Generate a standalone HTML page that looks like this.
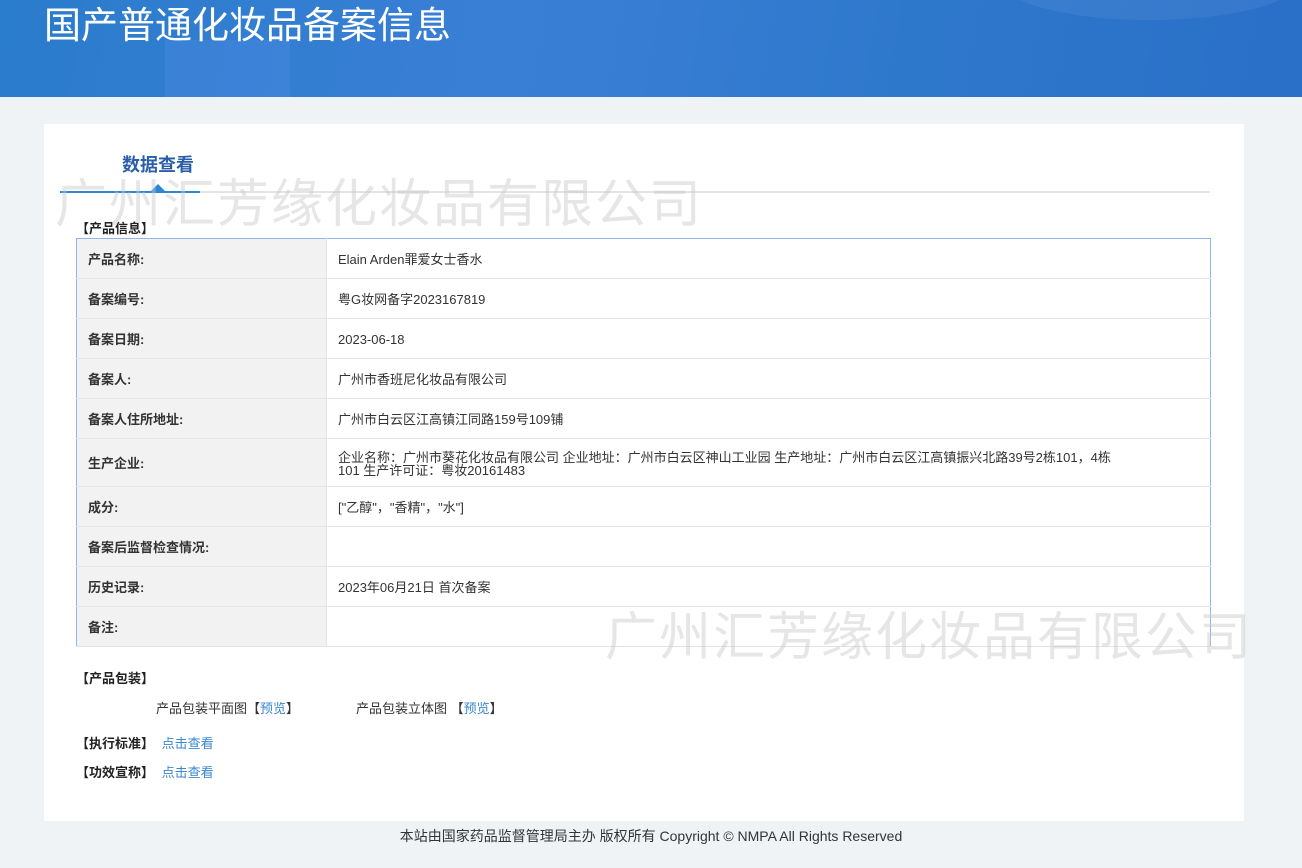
<!DOCTYPE html>
<html><head><meta charset="utf-8"><style>
*{margin:0;padding:0;box-sizing:border-box}
body{width:1302px;height:868px;background:#eff3f6;font-family:"Liberation Sans","Noto Sans CJK SC",sans-serif;font-size:13px;color:#333;position:relative;overflow:hidden}
.hdr{position:absolute;left:0;top:0;width:1302px;height:97px;background:linear-gradient(100deg,#2a7ccc 0%,#3a7fd6 40%,#2e78cc 70%,#2a6fc8 100%);overflow:hidden}
.hdr .b1{position:absolute;left:165px;top:40px;width:125px;height:60px;background:rgba(80,140,230,.35)}
.hdr .b2{position:absolute;left:1000px;top:-60px;width:300px;height:80px;border-radius:50%;background:rgba(255,255,255,.06)}
.hdr h1{position:absolute;left:44px;top:0;font-size:37px;font-weight:normal;color:#fff;line-height:44px;font-family:"Noto Sans CJK SC",sans-serif}
.card{position:absolute;left:44px;top:124px;width:1200px;height:697px;background:#fff}
.tt{position:absolute;left:122px;top:151px;font-size:18px;font-weight:bold;color:#2a5ea8;font-family:"Noto Sans CJK SC",sans-serif}
.ln{position:absolute;left:76px;top:191px;width:1134px;height:2px;background:#e4e4e4}
.lb{position:absolute;left:60px;top:191px;width:140px;height:2px;background:#2d86d6}
.tri{position:absolute;left:151px;top:184px;width:0;height:0;border-left:7px solid transparent;border-right:7px solid transparent;border-bottom:7px solid #2d86d6}
.wm{position:absolute;font-size:52px;color:rgba(200,200,200,.45);font-family:"Noto Sans CJK SC",sans-serif;letter-spacing:2px;white-space:nowrap;z-index:5;line-height:60px}
.sec{position:absolute;left:76px;font-weight:bold;font-size:13px;color:#222}
table{position:absolute;left:76px;top:238px;width:1135px;border-collapse:collapse;border:1px solid #8fb6e8}
td{border-bottom:1px solid #e4e4e4;height:40px;vertical-align:middle}
td.l{width:250px;background:#f2f2f2;padding-left:11px;font-weight:bold;color:#333;border-right:1px solid #e4e4e4}
td.v{padding-left:11px;color:#333;line-height:13px;padding-top:2px}
a{color:#3a86d0;text-decoration:none}
.ft{position:absolute;left:0;width:1302px;top:826px;text-align:center;font-size:14px;color:#333}
</style></head><body>
<div class="hdr"><div class="b1"></div><div class="b2"></div><h1>国产普通化妆品备案信息</h1></div>
<div class="card"></div>
<div class="tt">数据查看</div>
<div class="ln"></div><div class="lb"></div><div class="tri"></div>
<div class="wm" style="left:55px;top:170px">广州汇芳缘化妆品有限公司</div>
<div class="wm" style="left:605px;top:603px">广州汇芳缘化妆品有限公司</div>
<div class="sec" style="top:218px">【产品信息】</div>
<table>
<tr><td class="l">产品名称:</td><td class="v">Elain Arden罪爱女士香水</td></tr>
<tr><td class="l">备案编号:</td><td class="v">粤G妆网备字2023167819</td></tr>
<tr><td class="l">备案日期:</td><td class="v">2023-06-18</td></tr>
<tr><td class="l">备案人:</td><td class="v">广州市香班尼化妆品有限公司</td></tr>
<tr><td class="l">备案人住所地址:</td><td class="v">广州市白云区江高镇江同路159号109铺</td></tr>
<tr><td class="l" style="height:48px">生产企业:</td><td class="v">企业名称：广州市葵花化妆品有限公司 企业地址：广州市白云区神山工业园 生产地址：广州市白云区江高镇振兴北路39号2栋101，4栋<br>101 生产许可证：粤妆20161483</td></tr>
<tr><td class="l">成分:</td><td class="v">["乙醇"，"香精"，"水"]</td></tr>
<tr><td class="l">备案后监督检查情况:</td><td class="v"></td></tr>
<tr><td class="l">历史记录:</td><td class="v">2023年06月21日 首次备案</td></tr>
<tr><td class="l">备注:</td><td class="v"></td></tr>
</table>
<div class="sec" style="top:668px">【产品包装】</div>
<div style="position:absolute;left:156px;top:698px">产品包装平面图【<a>预览</a>】</div>
<div style="position:absolute;left:356px;top:698px">产品包装立体图 【<a>预览</a>】</div>
<div class="sec" style="top:733px">【执行标准】 <a style="font-weight:normal;margin-left:4px">点击查看</a></div>
<div class="sec" style="top:762px">【功效宣称】 <a style="font-weight:normal;margin-left:4px">点击查看</a></div>
<div class="ft">本站由国家药品监督管理局主办 版权所有 Copyright © NMPA All Rights Reserved</div>
</body></html>
